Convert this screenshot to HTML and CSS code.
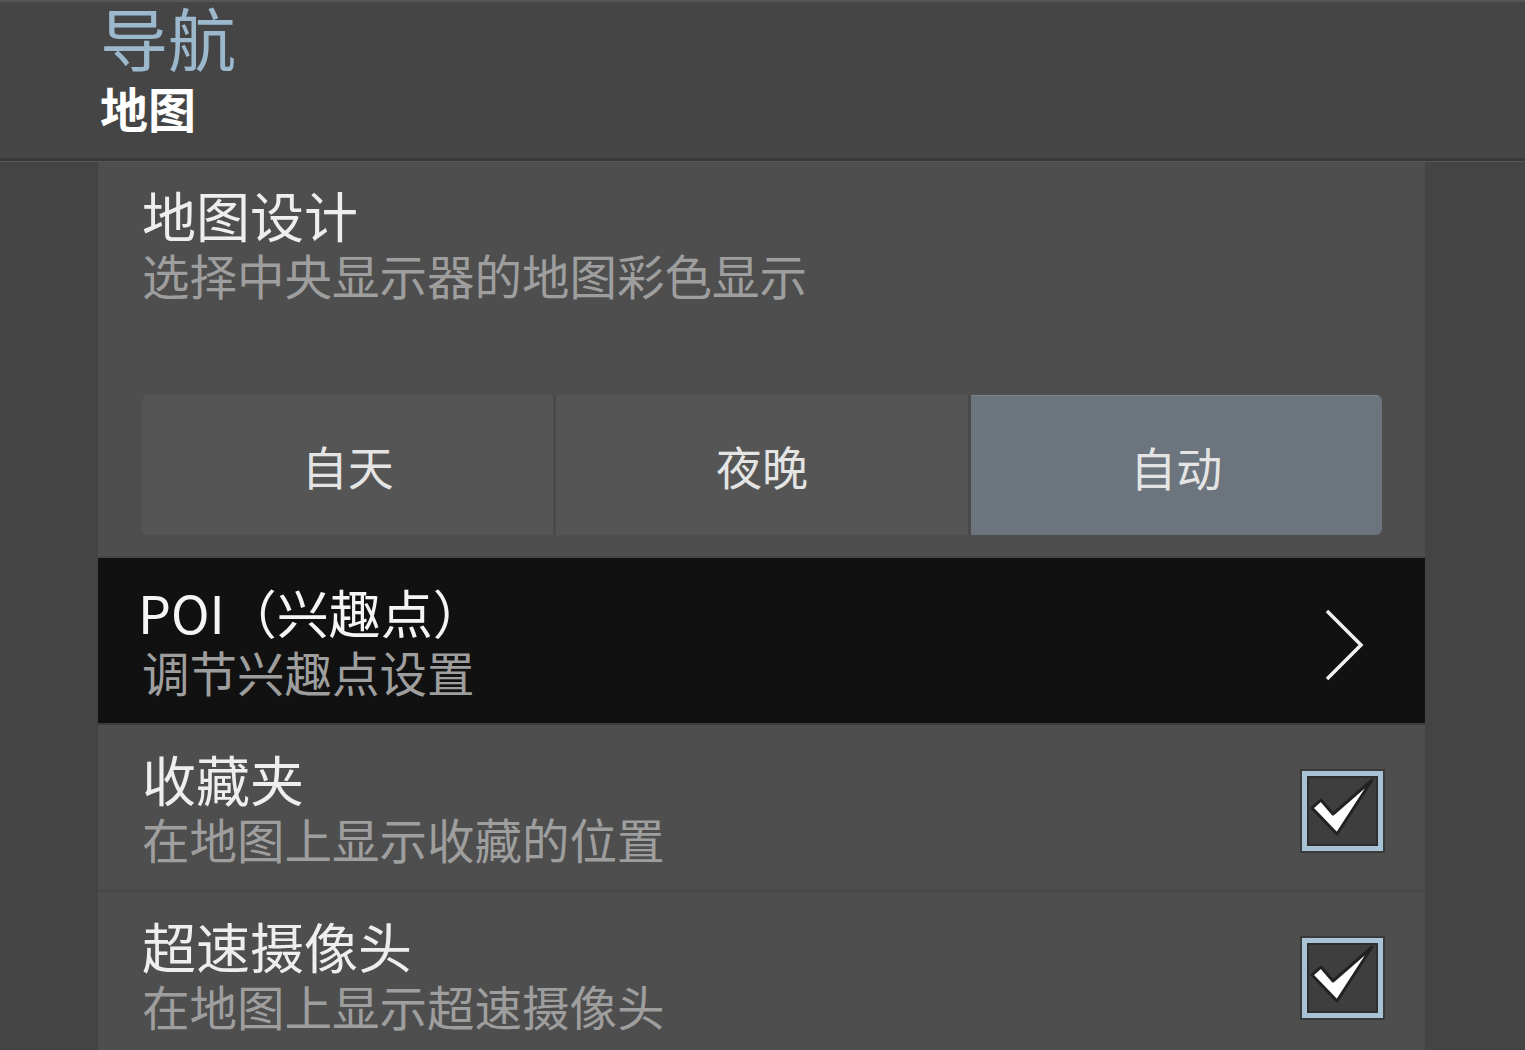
FILE: index.html
```html
<!DOCTYPE html>
<html lang="zh-CN">
<head>
<meta charset="utf-8">
<title>导航 - 地图</title>
<link rel="stylesheet" href="styles.css">
</head>
<body>
<div class="header">
    <div class="header-title">导航</div>
    <div class="header-sub">地图</div>
</div>
<div class="page">
    <div class="content">
        <!-- 地图设计 -->
        <div class="section">
            <div class="item-title">地图设计</div>
            <div class="item-desc">选择中央显示器的地图彩色显示</div>
            <div class="segment">
                <div class="seg">自天</div>
                <div class="seg">夜晚</div>
                <div class="seg on">自动</div>
            </div>
        </div>
        <div class="row row-active">
            <div class="row-text">
                <div class="item-title poi">POI（兴趣点）</div>
                <div class="item-desc">调节兴趣点设置</div>
            </div>
            <svg class="chevron" width="44" height="80" viewBox="0 0 44 80">
                <polyline points="4,6 38,40 4,74" fill="none" stroke="#111" stroke-width="7"/>
                <polyline points="4,6 38,40 4,74" fill="none" stroke="#f2f2f2" stroke-width="3.5"/>
            </svg>
        </div>
        <div class="row">
            <div class="row-text">
                <div class="item-title">收藏夹</div>
                <div class="item-desc">在地图上显示收藏的位置</div>
            </div>
            <div class="check">
                <svg width="71" height="70" viewBox="0 0 71 70">
                    <path d="M5,32 L14,24 L26,38 L65,4 L30,58 Z" fill="#fff" stroke="#222" stroke-width="3" stroke-linejoin="round"/>
                </svg>
            </div>
        </div>
        <div class="row row-last">
            <div class="row-text">
                <div class="item-title">超速摄像头</div>
                <div class="item-desc">在地图上显示超速摄像头</div>
            </div>
            <div class="check">
                <svg width="71" height="70" viewBox="0 0 71 70">
                    <path d="M5,32 L14,24 L26,38 L65,4 L30,58 Z" fill="#fff" stroke="#222" stroke-width="3" stroke-linejoin="round"/>
                </svg>
            </div>
        </div>
    </div>
</div>
</body>
</html>
```

FILE: styles.css
```css
html, body{
    margin:0;
    padding:0;
    height:100%;
    overflow:hidden;
}
body{
    background:#444;
    font-family:"Noto Sans CJK SC", "Noto Sans", sans-serif;
    color:#eee;
}
.header{
    height:156px;
    padding-left:100px;
    background:#454545;
    border-top:2px solid #555;
    border-bottom:3px solid #393939;
    box-sizing:content-box;
}
.header-title{
    font-size:68px;
    line-height:70px;
    padding-top:0;
    color:#9bb8cc;
}
.header-sub{
    font-size:48px;
    line-height:54px;
    font-weight:bold;
    color:#fff;
    margin-top:8px;
}
.page{
    display:flex;
    justify-content:center;
    padding-left:98px;
    padding-right:100px;
    height:100%;
    border-top:1px solid #575757;
}
.content{
    flex:1;
    background:#4e4e4e;
}
.section{
    padding:22px 43px 21px 44px;
    border-bottom:2px solid #474747;
}
.item-title{
    font-size:54px;
    line-height:62px;
    color:#eee;
}
.item-desc{
    font-size:47.5px;
    line-height:58px;
    color:#9e9e9e;
}
.segment{
    display:flex;
    margin-top:91px;
    height:140px;
    border-radius:6px;
    overflow:hidden;
}
.seg{
    flex:1;
    display:flex;
    align-items:center;
    justify-content:center;
    background:#555;
    font-size:46px;
    color:#e4e4e4;
    border-right:3px solid #4a4a4a;
}
.seg:last-child{
    border-right:none;
}
.seg.on{
    background:#6c747d;
    border-top:1px solid #7a8590;
}
.row{
    display:flex;
    align-items:center;
    justify-content:space-between;
    height:165px;
    padding:0 42px 0 44px;
    border-bottom:2px solid #474747;
}
.row-active{
    background:#111;
    border-bottom:2px solid #3e3e3e;
    padding-right:58px;
    padding-left:40px;
}
.row-active .item-desc{
    padding-left:4px;
}
.row-last{
    border-bottom:none;
}
.poi{
    font-size:52px;
    color:#f5f5f5;
}
.row-text{
    padding-top:0;
}
.chevron{
    display:block;
    margin-top:8px;
}
.check{
    width:71px;
    height:70px;
    margin-top:6px;
    border:5px solid #a8c3d5;
    background:#3e3e3e;
    box-shadow:0 0 0 2px #3a3a3a, inset 0 0 0 2px #2e2e2e;
    display:flex;
    align-items:center;
    justify-content:center;
}
.check svg{
    display:block;
}
```
